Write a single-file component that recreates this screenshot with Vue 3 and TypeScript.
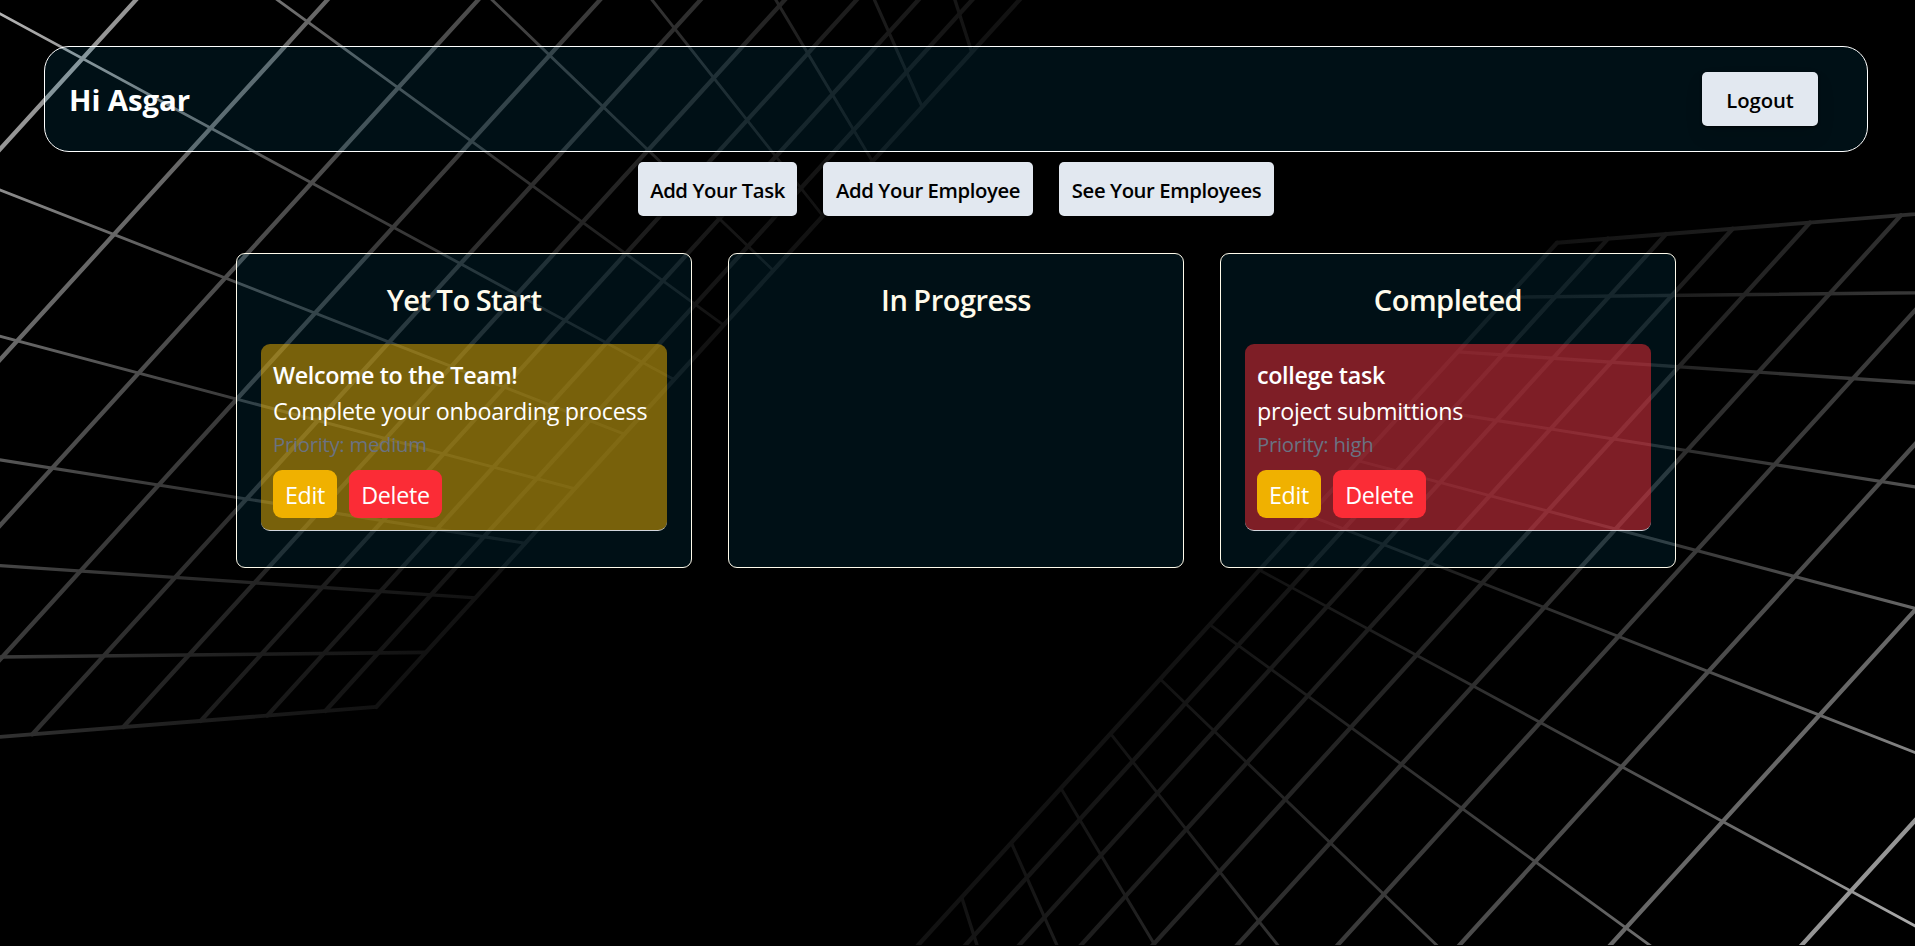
<script setup lang="ts">
interface Task {
  title: string
  description: string
  priority: 'medium' | 'high'
}
interface Column {
  name: string
  tasks: Task[]
}
interface Point {
  x: number
  y: number
}
interface Segment {
  id: string
  from: Point
  to: Point
  width: number
}

const columns: Column[] = [
  {
    name: 'Yet To Start',
    tasks: [{ title: 'Welcome to the Team!', description: 'Complete your onboarding process', priority: 'medium' }],
  },
  { name: 'In Progress', tasks: [] },
  {
    name: 'Completed',
    tasks: [{ title: 'college task', description: 'project submittions', priority: 'high' }],
  },
]

// Backdrop: a flat grid in perspective, its rays meeting at one vanishing point.
const vanish: Point = { x: 1161.7, y: 644.3 }
const corner: Point = { x: 376.3, y: 706.9 }
const step: Point = { x: 49.62, y: -54.55 }
const rayCount = 14
const shades = ['#121212', '#151515', '#191919', '#1d1d1d', '#242424', '#2e2e2e', '#3a3a3a', '#4c4c4c', '#676767', '#959595', '#d4d4d4']

const depth = (j: number): number => 1 / (1 - 0.0609 * j)
const node = (j: number, k: number): Point => ({
  x: vanish.x + depth(j) * (corner.x + k * step.x - vanish.x),
  y: vanish.y + depth(j) * (corner.y + k * step.y - vanish.y),
})

const last = shades.length - 1
const rows: Segment[] = shades.map((_, j) => ({ id: `row${j}`, from: node(j, 0), to: node(j, rayCount), width: 4.3 }))
const rays: Segment[] = Array.from({ length: rayCount + 1 }, (_, k) => ({
  id: `ray${k}`,
  from: node(0, k),
  to: node(last, k),
  width: 2.8 + 0.022 * (k - 7) ** 2,
}))
const segments: Segment[] = [...rows, ...rays]
const stops = shades.map((color, j) => ({ color, offset: (depth(j) - 1) / (depth(last) - 1) }))
</script>

<template>
  <div class="page">
    <svg class="backdrop" width="1915" height="945" viewBox="0 0 1915 945" aria-hidden="true">
      <defs>
        <linearGradient id="fade" gradientUnits="userSpaceOnUse" x1="763" y1="281.5" x2="142.3" y2="-283.2">
          <stop v-for="s in stops" :key="s.color" :offset="s.offset" :stop-color="s.color" />
        </linearGradient>
        <g id="grid" stroke="url(#fade)" stroke-linecap="round">
          <line
            v-for="s in segments"
            :key="s.id"
            :x1="s.from.x"
            :y1="s.from.y"
            :x2="s.to.x"
            :y2="s.to.y"
            :stroke-width="s.width"
          />
        </g>
      </defs>
      <use href="#grid" />
      <use href="#grid" transform="rotate(180 966.7 474.8)" />
    </svg>

    <main class="content">
      <header class="topbar">
        <h1 class="greeting">Hi Asgar</h1>
        <button class="action logout">Logout</button>
      </header>

      <nav class="actions">
        <button class="action add-task">Add Your Task</button>
        <button class="action add-employee">Add Your Employee</button>
        <button class="action see-employees">See Your Employees</button>
      </nav>

      <section class="board">
        <article v-for="column in columns" :key="column.name" class="column">
          <h2 class="column-title">{{ column.name }}</h2>
          <div v-for="task in column.tasks" :key="task.title" class="task" :class="task.priority">
            <h3 class="task-title">{{ task.title }}</h3>
            <p class="task-text">{{ task.description }}</p>
            <p class="task-priority">Priority: {{ task.priority }}</p>
            <div class="task-buttons">
              <button class="small edit">Edit</button>
              <button class="small delete">Delete</button>
            </div>
          </div>
        </article>
      </section>
    </main>
  </div>
</template>

<style>
html,
body {
  margin: 0;
  background: #000;
  overflow: hidden;
}
</style>

<style scoped>
.page {
  position: relative;
  height: 946px;
  background: #000;
  overflow: hidden;
  font-family: 'Segoe UI', 'Open Sans', 'Noto Sans', sans-serif;
  color: #fff;
}
.backdrop {
  position: absolute;
  top: 0;
  left: 0;
}
.content {
  position: relative;
  box-sizing: border-box;
  width: 1912px;
  padding: 46px 44px 0;
}
h1,
h2,
h3,
p {
  margin: 0;
}
button {
  border: 0;
  padding: 0;
  font-family: inherit;
}
.topbar {
  box-sizing: border-box;
  height: 106px;
  display: flex;
  align-items: center;
  justify-content: space-between;
  padding: 0 49px 0 24px;
  border: 1px solid #fff;
  border-radius: 25px;
  background: rgba(0, 160, 220, 0.1);
}
.greeting {
  padding-top: 2px;
  font-size: 29.4px;
  font-weight: 700;
  line-height: 44px;
  letter-spacing: -0.1px;
}
.action {
  height: 54px;
  padding-top: 1px;
  border-radius: 5px;
  background: #e2e8f0;
  color: #000;
  font-size: 20.3px;
  font-weight: 600;
  letter-spacing: -0.4px;
  box-shadow: 0 1px 3px rgba(0, 0, 0, 0.8), 0 10px 18px rgba(0, 0, 0, 0.1);
}
.logout {
  width: 116px;
  letter-spacing: -0.1px;
}
.actions {
  display: flex;
  justify-content: center;
  gap: 26px;
  margin-top: 10px;
}
.add-task {
  width: 159px;
}
.add-employee {
  width: 210px;
}
.see-employees {
  width: 215px;
}
.board {
  display: grid;
  grid-template-columns: repeat(3, 456px);
  justify-content: center;
  gap: 36px;
  margin-top: 37px;
}
.column {
  box-sizing: border-box;
  height: 315px;
  padding: 24px;
  border: 1px solid #fffbeb;
  border-radius: 9px;
  background: rgba(0, 160, 220, 0.1);
}
.column-title {
  margin-bottom: 23px;
  text-align: center;
  color: #fffbeb;
  font-size: 29px;
  font-weight: 600;
  line-height: 43px;
  letter-spacing: -0.5px;
  word-spacing: -1px;
}
.task {
  box-sizing: border-box;
  height: 187px;
  padding: 13px 12px 12px;
  border-bottom: 1px solid #d1d5dc;
  border-radius: 9px;
}
.task.medium {
  background: rgba(240, 177, 0, 0.5);
}
.task.high {
  background: rgba(251, 44, 54, 0.5);
}
.task-title {
  font-size: 23.3px;
  font-weight: 600;
  line-height: 36px;
  letter-spacing: -0.34px;
}
.task-text {
  font-size: 23.3px;
  line-height: 36px;
  letter-spacing: -0.27px;
  white-space: nowrap;
}
.task-priority {
  color: #6a7282;
  font-size: 20.3px;
  line-height: 30px;
  letter-spacing: -0.28px;
}
.task-buttons {
  display: flex;
  gap: 12px;
  margin-top: 11px;
}
.small {
  height: 48px;
  padding-top: 2px;
  border-radius: 9px;
  color: #fff;
  font-size: 23.3px;
  letter-spacing: -0.3px;
}
.edit {
  width: 64px;
  background: #f0b100;
}
.delete {
  width: 93px;
  background: #fb2c36;
}
</style>
